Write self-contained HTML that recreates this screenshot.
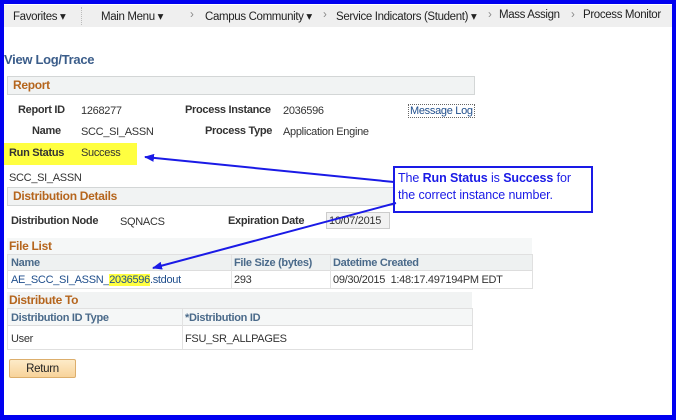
<!DOCTYPE html>
<html><head><meta charset="utf-8"><style>
*{margin:0;padding:0;box-sizing:border-box}
body{width:676px;height:420px;overflow:hidden;background:#fff;font-family:"Liberation Sans",Arial,sans-serif;font-size:11px;color:#333;position:relative;letter-spacing:-0.3px}
#frame{position:absolute;left:0;top:0;width:676px;height:420px;border:4px solid #0000f0;border-bottom-width:5px;z-index:5;pointer-events:none}
.a{position:absolute;white-space:nowrap}
.b{font-weight:bold;color:#333}
.nav{position:absolute;left:4px;top:5px;width:668px;height:22px;background:#efefef;font-size:11.5px;color:#222;letter-spacing:-0.35px}
.nav .a{top:4px}
.g{color:#888}
.bar{position:absolute;background:#f1f3f3;border:1px solid #d3d6d6}
.hd{color:#b5651d;font-weight:bold;font-size:12px}
.th{color:#4a6a8a;font-weight:bold}
.tbl{position:absolute;border:1px solid #e0e0e0}
</style></head><body>
<div id="frame"></div>
<div class="nav">
<span class="a" style="left:9px">Favorites ▾</span>
<div class="a" style="left:77px;top:2px;width:1px;height:18px;border-left:1px dotted #bbb"></div>
<span class="a" style="left:97px">Main Menu ▾</span>
<span class="a g" style="left:186px">›</span>
<span class="a" style="left:201px">Campus Community ▾</span>
<span class="a g" style="left:319px">›</span>
<span class="a" style="left:332px">Service Indicators (Student) ▾</span>
<span class="a g" style="left:484px">›</span>
<span class="a" style="left:495px">Mass Assign</span>
<span class="a g" style="left:567px">›</span>
<span class="a" style="left:579px">Process Monitor</span>
</div>
<span class="a" style="left:4px;top:52px;font-size:13px;font-weight:bold;color:#3b5d8a">View Log/Trace</span>
<div class="bar" style="left:7px;top:76px;width:468px;height:19px"></div>
<span class="a hd" style="left:13px;top:78px">Report</span>
<span class="a b" style="left:18px;top:104px">Report ID</span>
<span class="a" style="left:81px;top:105px">1268277</span>
<span class="a b" style="left:185px;top:104px">Process Instance</span>
<span class="a" style="left:283px;top:105px">2036596</span>
<span class="a" style="left:408px;top:104px;color:#1f4e8c;border:1px dotted #666;padding:0 1px">Message Log</span>
<span class="a b" style="left:32px;top:125px">Name</span>
<span class="a" style="left:81px;top:126px">SCC_SI_ASSN</span>
<span class="a b" style="left:205px;top:125px">Process Type</span>
<span class="a" style="left:283px;top:126px">Application Engine</span>
<div class="a" style="left:4px;top:143px;width:133px;height:22px;background:#ffff40"></div>
<span class="a b" style="left:9px;top:147px">Run Status</span>
<span class="a" style="left:81px;top:147px">Success</span>
<span class="a" style="left:9px;top:172px">SCC_SI_ASSN</span>
<div class="bar" style="left:7px;top:187px;width:468px;height:19px"></div>
<span class="a hd" style="left:13px;top:189px">Distribution Details</span>
<span class="a b" style="left:11px;top:215px">Distribution Node</span>
<span class="a" style="left:120px;top:216px">SQNACS</span>
<span class="a b" style="left:228px;top:215px">Expiration Date</span>
<div class="a" style="left:326px;top:212px;width:64px;height:17px;background:#f2f2f2;border:1px solid #ccc;padding:2px 0 0 2px">10/07/2015</div>
<div class="a" style="left:7px;top:238px;width:525px;height:50px;background:#f5f7f7"></div>
<span class="a hd" style="left:9px;top:239px">File List</span>
<div class="tbl" style="left:7px;top:254px;width:526px;height:35px">
<div class="a" style="left:0;top:0;width:524px;height:16px;background:#eef1f1;border-bottom:1px solid #ddd"></div>
<div class="a" style="left:0;top:16px;width:524px;height:17px;background:#fff"></div>
<div class="a" style="left:223px;top:0;height:33px;border-left:1px solid #e2e2e2"></div>
<div class="a" style="left:322px;top:0;height:33px;border-left:1px solid #e2e2e2"></div>
<span class="a th" style="left:3px;top:2px">Name</span>
<span class="a th" style="left:226px;top:2px">File Size (bytes)</span>
<span class="a th" style="left:325px;top:2px">Datetime Created</span>
<span class="a" style="left:3px;top:19px;color:#1f4e8c">AE_SCC_SI_ASSN_<span style="background:#ffff40">2036596</span>.stdout</span>
<span class="a" style="left:226px;top:19px">293</span>
<span class="a" style="left:325px;top:19px">09/30/2015&nbsp; 1:48:17.497194PM EDT</span>
</div>
<div class="a" style="left:7px;top:292px;width:465px;height:16px;background:#f1f3f3"></div>
<span class="a hd" style="left:9px;top:293px">Distribute To</span>
<div class="tbl" style="left:7px;top:308px;width:466px;height:42px">
<div class="a" style="left:0;top:0;width:464px;height:17px;background:#f5f7f7;border-bottom:1px solid #ddd"></div>
<div class="a" style="left:174px;top:0;height:40px;border-left:1px solid #e2e2e2"></div>
<span class="a th" style="left:3px;top:3px">Distribution ID Type</span>
<span class="a th" style="left:177px;top:3px">*Distribution ID</span>
<span class="a" style="left:3px;top:24px">User</span>
<span class="a" style="left:177px;top:24px">FSU_SR_ALLPAGES</span>
</div>
<div class="a" style="left:9px;top:359px;width:67px;height:19px;border:1px solid #dcae6c;border-radius:2px;background:linear-gradient(#fdebc8,#f8d39a);text-align:center;padding-top:3px;color:#222;font-size:11.5px">Return</div>
<div class="a" style="left:393px;top:166px;width:200px;height:47px;border:2px solid #1a1ae6;background:#fff;color:#1a1ae6;font-size:12.5px;padding:2px 0 0 3px;line-height:17px;white-space:normal;letter-spacing:-0.1px">The <b>Run Status</b> is <b>Success</b> for the correct instance number.</div>
<svg class="a" style="left:0;top:0" width="676" height="420">
<defs><marker id="m" markerWidth="10" markerHeight="8" refX="9" refY="4" orient="auto" markerUnits="userSpaceOnUse"><path d="M0,0 L10,4 L0,8 z" fill="#1a1ae6"/></marker></defs>
<line x1="394" y1="182" x2="145" y2="157" stroke="#1a1ae6" stroke-width="2" marker-end="url(#m)"/>
<line x1="396" y1="203" x2="153" y2="268" stroke="#1a1ae6" stroke-width="2" marker-end="url(#m)"/>
</svg>
</body></html>
